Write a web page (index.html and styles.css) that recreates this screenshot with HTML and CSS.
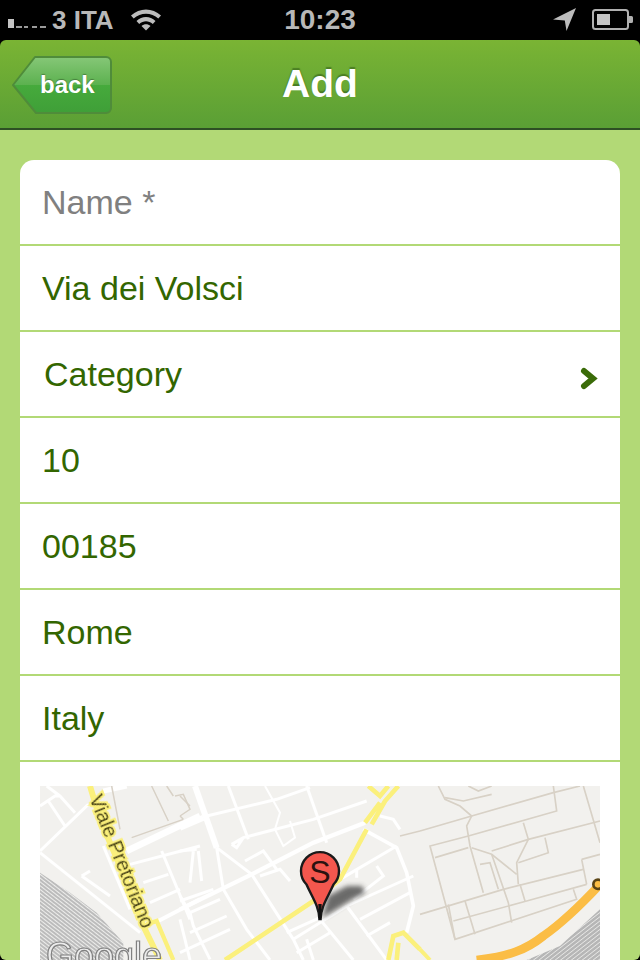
FILE: index.html
```
<!DOCTYPE html>
<html lang="en">
<head>
<meta charset="utf-8">
<title>Add</title>
<link rel="stylesheet" href="styles.css">
</head>
<body>
<div class="screen">
  <header class="status">
    <div class="status-left">
      <svg class="signal" width="40" height="10" viewBox="0 0 40 10"><rect x="0" y="0" width="6" height="9" fill="#c4c4c4"/><rect x="8" y="7" width="6" height="2" fill="#9a9a9a"/><rect x="16" y="7" width="4" height="2" fill="#9a9a9a"/><rect x="24" y="7" width="5" height="2" fill="#9a9a9a"/><rect x="32" y="7" width="6" height="2" fill="#9a9a9a"/></svg>
      <span class="carrier">3 ITA</span>
      <svg class="wifi" width="32" height="24" viewBox="0 0 32 24"><path d="M1 8.500C9.500 .5 22.500 .5 31 8.500L28.300 11.500C21.500 5 10.500 5 3.700 11.500Z" fill="#bcbcbc"/><path d="M6.500 14C12 8.800 20 8.800 25.500 14L22.800 17C18.500 13.300 13.500 13.300 9.200 17Z" fill="#bcbcbc"/><path d="M11.500 19C14 16.800 18 16.800 20.500 19L16 23.500Z" fill="#bcbcbc"/></svg>
    </div>
    <div class="clock">10:23</div>
    <div class="status-right">
      <svg width="24" height="24" viewBox="0 0 24 24"><path d="M0 11.500L23 0L13.500 23L11.800 12.500Z" fill="#bcbcbc"/></svg>
      <svg width="42" height="22" viewBox="0 0 42 22"><rect x="1" y="1" width="35" height="19" rx="2.500" fill="none" stroke="#b0b0b0" stroke-width="2"/><rect x="5" y="5" width="13" height="11" fill="#c4c4c4"/><path d="M37 7h2.500a1.500 1.500 0 0 1 1.500 1.500v4a1.500 1.500 0 0 1-1.500 1.500H37z" fill="#b0b0b0"/></svg>
    </div>
  </header>

  <nav class="navbar">
    <div class="nav-left">
      <a class="back">
        <svg class="back-shape" width="100" height="58" viewBox="0 0 100 58">
          <defs>
            <linearGradient id="backFill" x1="0" y1="0" x2="0" y2="1">
              <stop offset="0" stop-color="#86c777"/>
              <stop offset=".5" stop-color="#5cb14f"/>
              <stop offset=".5" stop-color="#46aa3c"/>
              <stop offset="1" stop-color="#3f9f38"/>
            </linearGradient>
          </defs>
          <path d="M1 29L23 1H94a5 5 0 0 1 5 5V52a5 5 0 0 1-5 5H24Z" fill="url(#backFill)" stroke="#4f8c3a" stroke-width="2" stroke-linejoin="round"/>
        </svg>
        <span class="back-label">back</span>
      </a>
    </div>
    <h1 class="title">Add</h1>
    <div class="nav-right"></div>
  </nav>

  <main class="content">
    <section class="card">
      <div class="row row-placeholder">Name *</div>
      <div class="row">Via dei Volsci</div>
      <div class="row row-select"><span>Category</span>
        <svg class="chevron" width="20" height="25" viewBox="0 0 20 25"><path d="M6 5L15 12.500L6 20" fill="none" stroke="#3a6b08" stroke-width="6" stroke-linecap="round" stroke-linejoin="miter"/></svg>
      </div>
      <div class="row">10</div>
      <div class="row">00185</div>
      <div class="row">Rome</div>
      <div class="row">Italy</div>
      <div class="map-wrap">
        <svg class="map" width="560" height="174" viewBox="40 786 560 174">
          <defs>
            <filter id="soft" x="-5%" y="-5%" width="110%" height="110%"><feGaussianBlur stdDeviation="1.800"/></filter>
            <filter id="softText" x="-10%" y="-30%" width="120%" height="160%"><feGaussianBlur stdDeviation=".5"/></filter>
            <filter id="shadowBlur" x="-30%" y="-30%" width="160%" height="160%"><feGaussianBlur stdDeviation="2.500"/></filter>
            <pattern id="rails" width="9" height="9" patternUnits="userSpaceOnUse" patternTransform="rotate(38)"><rect width="9" height="9" fill="#bcbcbc"/><rect y="0" width="9" height="3" fill="#eeeeec"/></pattern>
            <pattern id="railsR" width="10" height="10" patternUnits="userSpaceOnUse" patternTransform="rotate(-38)"><rect width="10" height="10" fill="#b6b6b6"/><rect y="0" width="10" height="2.500" fill="#e6e6e4"/></pattern>
          </defs>
          <rect x="40" y="786" width="560" height="174" fill="#f2f1ee"/>

          <!-- left part of the map -->
          <g transform="translate(40 786) scale(.33333)" filter="url(#soft)" fill="none">
            <path d="M0 260L90 320L170 380L250 470L250 522H0Z" fill="url(#rails)" stroke="none"/>
            <g stroke="#fff" stroke-width="9">
              <path d="M0 195L145 55M25 45L75 120M0 60L45 30L60 30L105 80M20 0L60 30"/>
              <path d="M0 200L300 440"/>
              <path d="M125 270L210 330M125 270L150 255"/>
              <path d="M190 180L270 370"/>
              <path d="M270 235L480 180M365 195L450 400M310 290L385 265M330 350L420 310"/>
              <path d="M420 400L450 522"/>
            </g>
            <path d="M260 195L480 90" stroke="#fff" stroke-width="20"/>
            <path d="M190 15L260 0" stroke="#fff" stroke-width="16"/>
            <path d="M355 405L480 340" stroke="#fff" stroke-width="12"/>
            <g stroke="#d8d1c6" stroke-width="4.500">
              <path d="M335 0L385 105M275 155L430 100M405 30L430 25L450 70L420 90M215 0L240 130M380 0L400 30"/>
            </g>
            <path d="M150 0L180 100L240 240L310 420L360 522" stroke="#fbf07c" stroke-width="18"/>
            <path d="M320 415L350 405L400 522" stroke="#fbf07c" stroke-width="13"/>
          </g>

          <!-- centre of the map -->
          <g transform="translate(180 786) scale(.33333)" filter="url(#soft)" fill="none">
            <g stroke="#fff" stroke-width="9">
              <path d="M110 185L130 310L200 430L270 522M110 185L215 265L340 460L370 522"/>
              <path d="M80 90L290 40L390 5"/>
              <path d="M145 0L205 160M155 175L190 155L400 100L560 45M155 175L170 185L190 155"/>
              <path d="M380 0L440 170"/>
              <path d="M0 195L50 190M40 195L30 290M55 195L65 285"/>
              <path d="M195 225L250 195L290 250M240 270L300 250L330 285"/>
              <path d="M0 345L100 310M30 380L120 340M30 440L140 390M0 500L150 430M30 380L0 330M30 380L40 420L90 520"/>
              <path d="M340 460L500 360L700 270M320 440L420 395"/>
              <path d="M420 400L520 522M480 280L650 180M500 360L620 522M540 400L690 320M590 240L610 270L520 340"/>
              <path d="M600 90L640 100L660 130M350 500L450 440M380 460L400 522M530 250V275M560 450L630 410"/>
            </g>
            <path d="M255 0L300 80L285 130L310 180L345 155L330 105" stroke="#fff" stroke-width="6"/>
            <path d="M45 0L110 185" stroke="#fff" stroke-width="18"/>
            <path d="M0 125L70 95" stroke="#fff" stroke-width="18"/>
            <path d="M0 370L215 265L400 170L555 110" stroke="#fff" stroke-width="13"/>
            <path d="M550 130L650 185L680 260L700 360L680 440" stroke="#fff" stroke-width="11"/>
            <path d="M660 150L720 135" stroke="#d8d1c6" stroke-width="4.500"/>
            <path d="M10 100L0 90M0 30L30 60" stroke="#d8d1c6" stroke-width="4.500"/>
            <g stroke="#fbf07c" stroke-width="14">
              <path d="M135 522L400 345L480 280L560 130"/>
              <path d="M565 0L600 30L625 0M555 110L600 50M575 115L615 45L655 0"/>
              <path d="M625 522L640 450L670 440L720 490M650 522L655 470"/>
            </g>
          </g>

          <!-- right part of the map -->
          <g transform="translate(420 786) scale(.33333)" filter="url(#soft)" fill="none">
            <path d="M320 522L420 480L540 370V522Z" fill="url(#railsR)" stroke="none"/>
            <g stroke="#d8d1c6" stroke-width="5">
              <path d="M0 135L155 90L400 20L480 0"/>
              <path d="M55 0L75 40L120 60L155 90L140 120L150 180L190 320"/>
              <path d="M75 35L130 45L215 25M145 0L175 15L215 0"/>
              <path d="M400 0L410 75L145 150L30 180L105 460L470 340L460 310"/>
              <path d="M45 215L145 185"/>
              <path d="M310 110L325 160L290 230L295 295"/>
              <path d="M155 185L215 205L290 265M215 195L325 160L540 105"/>
              <path d="M375 155L385 200L295 230"/>
              <path d="M490 0L540 170M485 220L540 205M485 220L500 295"/>
              <path d="M0 385L250 310L490 250"/>
              <path d="M180 235L210 230L235 310M215 205L265 350L275 410M300 295L315 345"/>
              <path d="M135 345L165 445M100 405L320 345L500 295"/>
              <path d="M85 355L105 460"/>
            </g>
            <path d="M0 490L30 522" stroke="#fbf07c" stroke-width="12"/>
            <path d="M170 522C270 510 320 490 370 450C420 415 470 370 540 295" stroke="#fbbd44" stroke-width="26"/>
            <circle cx="534" cy="295" r="14" fill="#fbbd44" stroke="#5a4418" stroke-width="8"/>
          </g>

          <text class="road-label" filter="url(#softText)" transform="translate(89 798) rotate(68)">Viale Pretoriano</text>
          <text class="logo" filter="url(#softText)" x="46" y="968">Google</text>

          <path d="M322 918L328 896L347 886L362 886L365 893L353 899L337 909Z" fill="#4a4a4a" opacity=".8" filter="url(#shadowBlur)"/>
          <path d="M319.400 919C319 906 312 897 306.500 884.500A19 19 0 1 1 333.500 884.500C328 897 321 906 320.600 919Z" fill="#f4574e" stroke="#1a1a1a" stroke-width="2.400"/>
          <path d="M318.300 904H321.700L321 919H319Z" fill="#111"/>
          <text class="pin-letter" x="320" y="883">S</text>
        </svg>
      </div>
    </section>
  </main>
</div>
</body>
</html>
```
FILE: styles.css
```
* { box-sizing: border-box; }
html, body { margin: 0; padding: 0; background: #000; }
body { font-family: "Liberation Sans", Arial, sans-serif; }
.screen { width: 640px; height: 960px; overflow: hidden; display: flex; flex-direction: column; background: #000; }

.status { height: 40px; flex: none; display: grid; grid-template-columns: 1fr auto 1fr; align-items: center; color: #b8b8b8; font-weight: 700; }
.status-left { display: flex; align-items: center; padding-left: 8px; }
.signal { margin-top: 8px; margin-right: 4px; }
.carrier { font-size: 26px; line-height: 40px; }
.wifi { margin-left: 16px; margin-top: -2px; }
.clock { font-size: 28px; line-height: 40px; }
.status-right { display: flex; align-items: center; justify-content: flex-end; gap: 15px; padding-right: 6px; }

.navbar { height: 90px; flex: none; display: grid; grid-template-columns: 1fr auto 1fr; align-items: center; border-radius: 6px 6px 0 0; background: linear-gradient(#7ab434, #5a9f35); border-bottom: 2px solid #2d4f24; }
.nav-left { padding-left: 12px; display: flex; margin-top: 2px; }
.back { position: relative; display: block; width: 100px; height: 58px; }
.back-shape { display: block; }
.back-label { position: absolute; left: 28px; top: 14px; color: #fff; font-size: 24px; line-height: 30px; font-weight: 700; text-shadow: 0 -1px 1px rgba(0,0,0,.3); }
.title { margin: 0; color: #fff; font-size: 39px; line-height: 46px; font-weight: 700; text-shadow: 0 -2px 1px rgba(40,80,20,.5); }

.content { flex: 1; min-height: 0; padding: 30px 20px 0; background: #b2d976; overflow: hidden; border-radius: 0 0 6px 6px; }
.card { background: #fff; border-radius: 14px 14px 0 0; height: 100%; }
.row { height: 86px; padding: 0 22px; display: flex; align-items: center; font-size: 34px; color: #336600; border-bottom: 2px solid #b2d976; }
.row-placeholder { color: #808080; }
.row-select { justify-content: space-between; padding-left: 24px; padding-right: 22px; }
.chevron { margin-top: 9px; }
.map-wrap { padding: 24px 20px 0; }
.map { display: block; }
.road-label { font-size: 20px; fill: #4a4416; stroke: #fbf07c; stroke-width: 4px; paint-order: stroke; }
.logo { font-size: 36px; fill: #ececec; stroke: #808080; stroke-width: 1.200px; }
.pin-letter { font-size: 32px; text-anchor: middle; fill: #2b1210; }
```
